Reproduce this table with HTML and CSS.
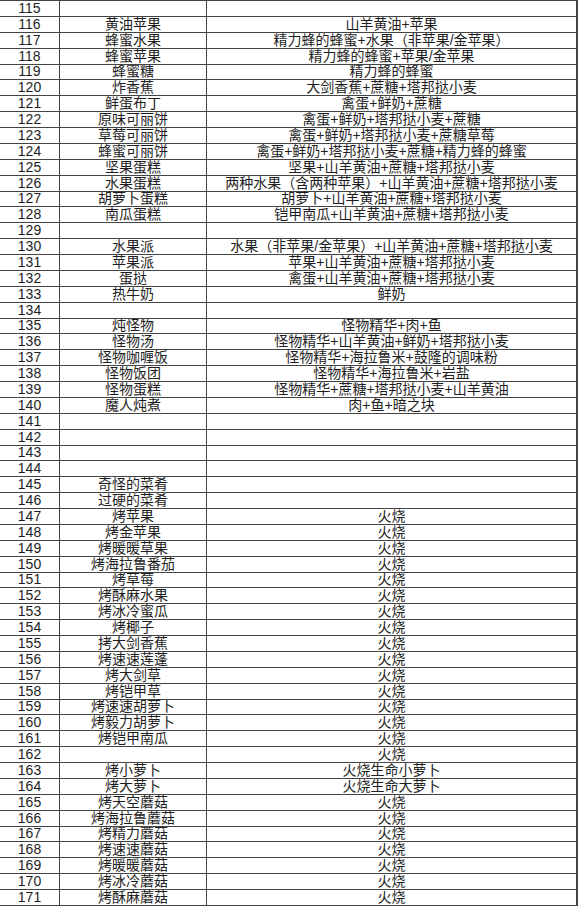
FILE: index.html
```html
<!DOCTYPE html>
<html lang="zh-CN">
<head>
<meta charset="utf-8">
<link rel="stylesheet" href="styles.css">
</head>
<body>
<div class="sheet">
<div class="row"><div class="c num">115</div><div class="c name"></div><div class="c rec"></div></div>
<div class="row"><div class="c num">116</div><div class="c name">黄油苹果</div><div class="c rec">山羊黄油+苹果</div></div>
<div class="row"><div class="c num">117</div><div class="c name">蜂蜜水果</div><div class="c rec">精力蜂的蜂蜜+水果（非苹果/金苹果）</div></div>
<div class="row"><div class="c num">118</div><div class="c name">蜂蜜苹果</div><div class="c rec">精力蜂的蜂蜜+苹果/金苹果</div></div>
<div class="row"><div class="c num">119</div><div class="c name">蜂蜜糖</div><div class="c rec">精力蜂的蜂蜜</div></div>
<div class="row"><div class="c num">120</div><div class="c name">炸香蕉</div><div class="c rec">大剑香蕉+蔗糖+塔邦挞小麦</div></div>
<div class="row"><div class="c num">121</div><div class="c name">鲜蛋布丁</div><div class="c rec">禽蛋+鲜奶+蔗糖</div></div>
<div class="row"><div class="c num">122</div><div class="c name">原味可丽饼</div><div class="c rec">禽蛋+鲜奶+塔邦挞小麦+蔗糖</div></div>
<div class="row"><div class="c num">123</div><div class="c name">草莓可丽饼</div><div class="c rec">禽蛋+鲜奶+塔邦挞小麦+蔗糖草莓</div></div>
<div class="row"><div class="c num">124</div><div class="c name">蜂蜜可丽饼</div><div class="c rec">禽蛋+鲜奶+塔邦挞小麦+蔗糖+精力蜂的蜂蜜</div></div>
<div class="row"><div class="c num">125</div><div class="c name">坚果蛋糕</div><div class="c rec">坚果+山羊黄油+蔗糖+塔邦挞小麦</div></div>
<div class="row"><div class="c num">126</div><div class="c name">水果蛋糕</div><div class="c rec">两种水果（含两种苹果）+山羊黄油+蔗糖+塔邦挞小麦</div></div>
<div class="row"><div class="c num">127</div><div class="c name">胡萝卜蛋糕</div><div class="c rec">胡萝卜+山羊黄油+蔗糖+塔邦挞小麦</div></div>
<div class="row"><div class="c num">128</div><div class="c name">南瓜蛋糕</div><div class="c rec">铠甲南瓜+山羊黄油+蔗糖+塔邦挞小麦</div></div>
<div class="row"><div class="c num">129</div><div class="c name"></div><div class="c rec"></div></div>
<div class="row"><div class="c num">130</div><div class="c name">水果派</div><div class="c rec">水果（非苹果/金苹果）+山羊黄油+蔗糖+塔邦挞小麦</div></div>
<div class="row"><div class="c num">131</div><div class="c name">苹果派</div><div class="c rec">苹果+山羊黄油+蔗糖+塔邦挞小麦</div></div>
<div class="row"><div class="c num">132</div><div class="c name">蛋挞</div><div class="c rec">禽蛋+山羊黄油+蔗糖+塔邦挞小麦</div></div>
<div class="row"><div class="c num">133</div><div class="c name">热牛奶</div><div class="c rec">鲜奶</div></div>
<div class="row"><div class="c num">134</div><div class="c name"></div><div class="c rec"></div></div>
<div class="row"><div class="c num">135</div><div class="c name">炖怪物</div><div class="c rec">怪物精华+肉+鱼</div></div>
<div class="row"><div class="c num">136</div><div class="c name">怪物汤</div><div class="c rec">怪物精华+山羊黄油+鲜奶+塔邦挞小麦</div></div>
<div class="row"><div class="c num">137</div><div class="c name">怪物咖喱饭</div><div class="c rec">怪物精华+海拉鲁米+鼓隆的调味粉</div></div>
<div class="row"><div class="c num">138</div><div class="c name">怪物饭团</div><div class="c rec">怪物精华+海拉鲁米+岩盐</div></div>
<div class="row"><div class="c num">139</div><div class="c name">怪物蛋糕</div><div class="c rec">怪物精华+蔗糖+塔邦挞小麦+山羊黄油</div></div>
<div class="row"><div class="c num">140</div><div class="c name">魔人炖煮</div><div class="c rec">肉+鱼+暗之块</div></div>
<div class="row"><div class="c num">141</div><div class="c name"></div><div class="c rec"></div></div>
<div class="row"><div class="c num">142</div><div class="c name"></div><div class="c rec"></div></div>
<div class="row"><div class="c num">143</div><div class="c name"></div><div class="c rec"></div></div>
<div class="row"><div class="c num">144</div><div class="c name"></div><div class="c rec"></div></div>
<div class="row"><div class="c num">145</div><div class="c name">奇怪的菜肴</div><div class="c rec"></div></div>
<div class="row"><div class="c num">146</div><div class="c name">过硬的菜肴</div><div class="c rec"></div></div>
<div class="row"><div class="c num">147</div><div class="c name">烤苹果</div><div class="c rec">火烧</div></div>
<div class="row"><div class="c num">148</div><div class="c name">烤金苹果</div><div class="c rec">火烧</div></div>
<div class="row"><div class="c num">149</div><div class="c name">烤暖暖草果</div><div class="c rec">火烧</div></div>
<div class="row"><div class="c num">150</div><div class="c name">烤海拉鲁番茄</div><div class="c rec">火烧</div></div>
<div class="row"><div class="c num">151</div><div class="c name">烤草莓</div><div class="c rec">火烧</div></div>
<div class="row"><div class="c num">152</div><div class="c name">烤酥麻水果</div><div class="c rec">火烧</div></div>
<div class="row"><div class="c num">153</div><div class="c name">烤冰冷蜜瓜</div><div class="c rec">火烧</div></div>
<div class="row"><div class="c num">154</div><div class="c name">烤椰子</div><div class="c rec">火烧</div></div>
<div class="row"><div class="c num">155</div><div class="c name">拷大剑香蕉</div><div class="c rec">火烧</div></div>
<div class="row"><div class="c num">156</div><div class="c name">烤速速莲蓬</div><div class="c rec">火烧</div></div>
<div class="row"><div class="c num">157</div><div class="c name">烤大剑草</div><div class="c rec">火烧</div></div>
<div class="row"><div class="c num">158</div><div class="c name">烤铠甲草</div><div class="c rec">火烧</div></div>
<div class="row"><div class="c num">159</div><div class="c name">烤速速胡萝卜</div><div class="c rec">火烧</div></div>
<div class="row"><div class="c num">160</div><div class="c name">烤毅力胡萝卜</div><div class="c rec">火烧</div></div>
<div class="row"><div class="c num">161</div><div class="c name">烤铠甲南瓜</div><div class="c rec">火烧</div></div>
<div class="row"><div class="c num">162</div><div class="c name"></div><div class="c rec">火烧</div></div>
<div class="row"><div class="c num">163</div><div class="c name">烤小萝卜</div><div class="c rec">火烧生命小萝卜</div></div>
<div class="row"><div class="c num">164</div><div class="c name">烤大萝卜</div><div class="c rec">火烧生命大萝卜</div></div>
<div class="row"><div class="c num">165</div><div class="c name">烤天空蘑菇</div><div class="c rec">火烧</div></div>
<div class="row"><div class="c num">166</div><div class="c name">烤海拉鲁蘑菇</div><div class="c rec">火烧</div></div>
<div class="row"><div class="c num">167</div><div class="c name">烤精力蘑菇</div><div class="c rec">火烧</div></div>
<div class="row"><div class="c num">168</div><div class="c name">烤速速蘑菇</div><div class="c rec">火烧</div></div>
<div class="row"><div class="c num">169</div><div class="c name">烤暖暖蘑菇</div><div class="c rec">火烧</div></div>
<div class="row"><div class="c num">170</div><div class="c name">烤冰冷蘑菇</div><div class="c rec">火烧</div></div>
<div class="row"><div class="c num">171</div><div class="c name">烤酥麻蘑菇</div><div class="c rec">火烧</div></div>
</div>
</body>
</html>
```
FILE: styles.css
```css
html, body {
  margin: 0;
  padding: 0;
  background: #ffffff;
}
body {
  font-family: "Liberation Sans", "Noto Sans CJK SC", sans-serif;
  font-size: 14px;
  color: #1e1e1e;
  text-spacing-trim: space-all;
}
.sheet {
  width: 578px;
  border-top: 1px solid #444;
  border-right: 2px solid #444;
  box-sizing: border-box;
  display: grid;
  grid-template-columns: 60px 147px 1fr;
  grid-auto-rows: 15.88px;
}
.row {
  display: contents;
}
.c {
  border-bottom: 1px solid #444;
  box-sizing: border-box;
  text-align: center;
  line-height: 15px;
  white-space: nowrap;
  overflow: hidden;
  display: flex;
  align-items: flex-end;
  justify-content: center;
}
.num, .name {
  border-right: 1px solid #444;
}
```
